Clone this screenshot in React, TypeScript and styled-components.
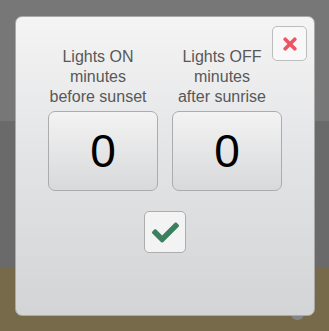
import React from 'react';
import styled, { createGlobalStyle } from 'styled-components';
import { FaCheck } from 'react-icons/fa';

const GlobalStyle = createGlobalStyle`
  html, body {
    margin: 0;
    padding: 0;
  }
  body {
    font-family: 'Liberation Sans', Arial, sans-serif;
  }
`;

const Page = styled.div`
  position: relative;
  z-index: 0;
  width: 329px;
  height: 331px;
  box-sizing: border-box;
  padding: 16px 0 0 15px;
  background: linear-gradient(
    to bottom,
    #777777 0,
    #777777 121px,
    #6a6a6a 121px,
    #6a6a6a 267px,
    #776a4b 267px
  );
  overflow: hidden;
`;

const Dialog = styled.div`
  position: relative;
  width: 300px;
  height: 300px;
  box-sizing: border-box;
  border: 1px solid #a9a9a9;
  border-radius: 7px;
  background: linear-gradient(to bottom, #f4f4f4 0%, #e2e3e5 50%, #d3d4d6 100%);
  padding-top: 30px;
  display: flex;
  flex-direction: column;
  align-items: center;

  &::after {
    content: '';
    position: absolute;
    right: 10px;
    bottom: -5px;
    width: 13px;
    height: 8px;
    border-radius: 0 0 6px 6px;
    background: #858585;
    z-index: -1;
  }
`;

const CloseButton = styled.button`
  position: absolute;
  top: 9px;
  right: 7px;
  width: 35px;
  height: 35px;
  box-sizing: border-box;
  border: 1px solid #bdbdbd;
  border-radius: 5px;
  background: #f8f8f8;
  padding: 0;
  display: flex;
  align-items: center;
  justify-content: center;
  cursor: pointer;
`;

const Columns = styled.div`
  display: grid;
  grid-template-columns: 110px 110px;
  column-gap: 14px;
`;

const Column = styled.div`
  display: flex;
  flex-direction: column;
`;

const Label = styled.div`
  box-sizing: border-box;
  padding-right: 10px;
  margin: 0 -10px;
  width: 130px;
  text-align: center;
  font-size: 16px;
  line-height: 20px;
  color: #585858;
  white-space: nowrap;
`;

const ValueBox = styled.div`
  margin-top: 4px;
  height: 80px;
  box-sizing: border-box;
  border: 1px solid #acacac;
  border-radius: 7px;
  background: linear-gradient(to bottom, #f3f3f3 0%, #d8d9db 100%);
  display: flex;
  align-items: center;
  justify-content: center;
  font-size: 46px;
  color: #000;
`;

const ConfirmButton = styled.button`
  margin-top: 20px;
  width: 42px;
  height: 42px;
  box-sizing: border-box;
  border: 1px solid #adadad;
  border-radius: 5px;
  background: #f3f3f3;
  padding: 0;
  display: flex;
  align-items: center;
  justify-content: center;
  color: #3b7f5e;
  cursor: pointer;
`;

const CloseIcon = () => (
  <svg width="14" height="14" viewBox="0 0 14 14">
    <path
      d="M2.2 2.2 L11.8 11.8 M11.8 2.2 L2.2 11.8"
      stroke="#ee5461"
      strokeWidth="3.6"
      strokeLinecap="round"
    />
  </svg>
);

const fields = [
  { lines: ['Lights ON', 'minutes', 'before sunset'], value: 0 },
  { lines: ['Lights OFF', 'minutes', 'after sunrise'], value: 0 },
];

const App = () => (
  <Page>
    <GlobalStyle />
    <Dialog>
      <CloseButton aria-label="close">
        <CloseIcon />
      </CloseButton>
      <Columns>
        {fields.map((f) => (
          <Column key={f.lines[0]}>
            <Label>
              {f.lines.map((l) => (
                <div key={l}>{l}</div>
              ))}
            </Label>
            <ValueBox>{f.value}</ValueBox>
          </Column>
        ))}
      </Columns>
      <ConfirmButton aria-label="confirm">
        <FaCheck size={27} />
      </ConfirmButton>
    </Dialog>
  </Page>
);

export default App;
